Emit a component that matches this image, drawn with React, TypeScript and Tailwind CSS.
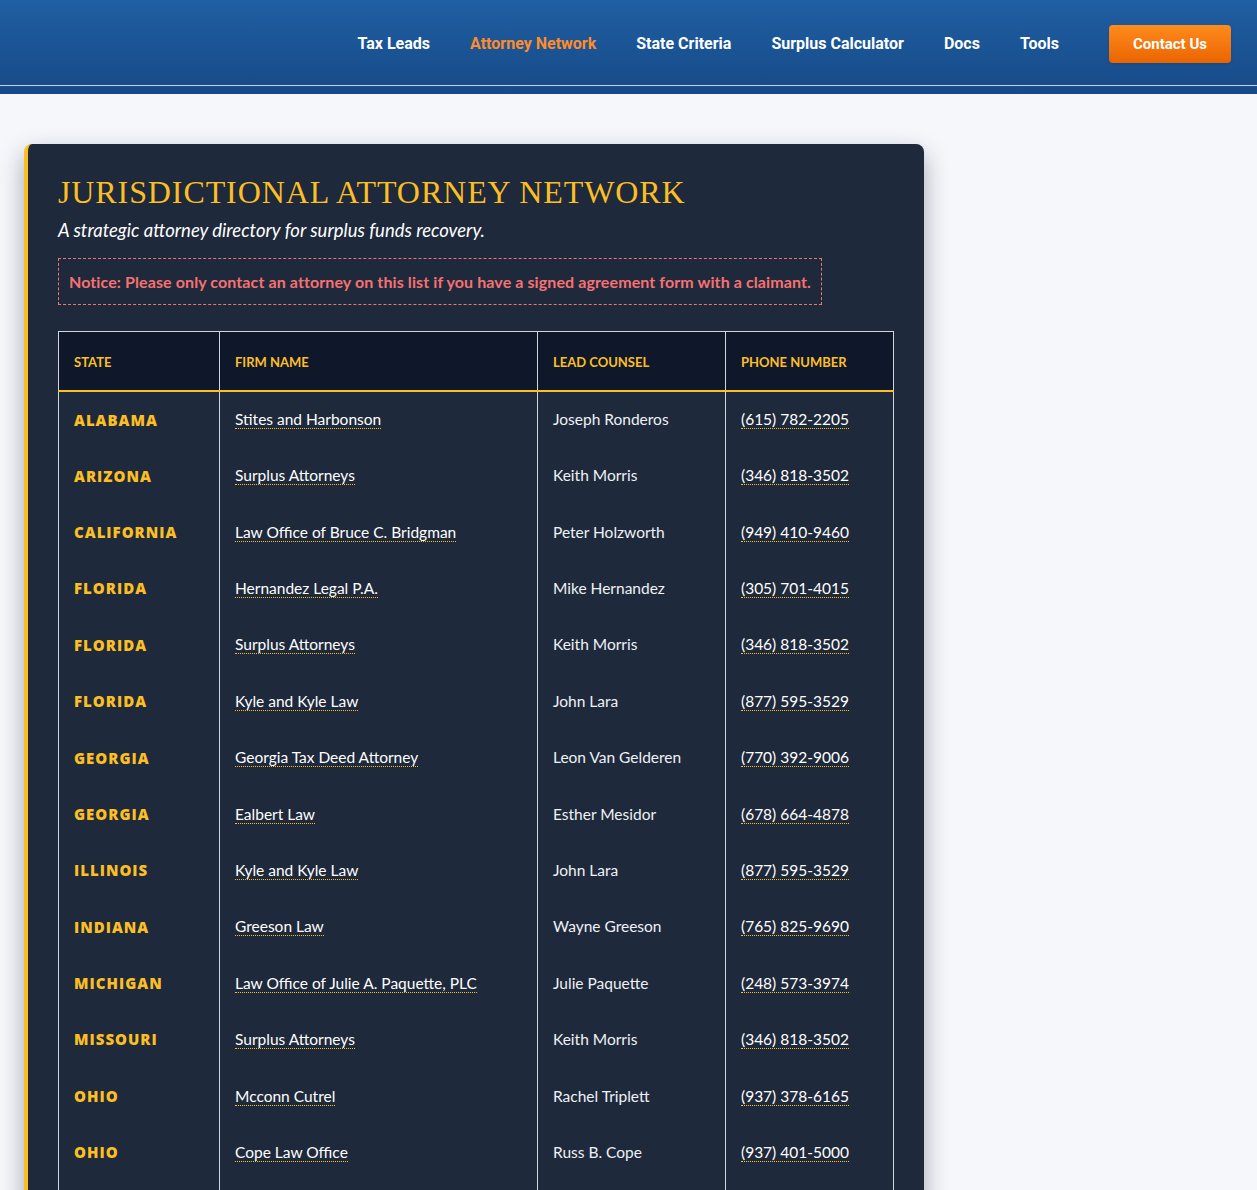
const navItems = [
  { label: "Tax Leads", active: false },
  { label: "Attorney Network", active: true },
  { label: "State Criteria", active: false },
  { label: "Surplus Calculator", active: false },
  { label: "Docs", active: false },
  { label: "Tools", active: false },
];

const attorneys = [
  { state: "Alabama", firm: "Stites and Harbonson", counsel: "Joseph Ronderos", phone: "(615) 782-2205" },
  { state: "Arizona", firm: "Surplus Attorneys", counsel: "Keith Morris", phone: "(346) 818-3502" },
  { state: "California", firm: "Law Office of Bruce C. Bridgman", counsel: "Peter Holzworth", phone: "(949) 410-9460" },
  { state: "Florida", firm: "Hernandez Legal P.A.", counsel: "Mike Hernandez", phone: "(305) 701-4015" },
  { state: "Florida", firm: "Surplus Attorneys", counsel: "Keith Morris", phone: "(346) 818-3502" },
  { state: "Florida", firm: "Kyle and Kyle Law", counsel: "John Lara", phone: "(877) 595-3529" },
  { state: "Georgia", firm: "Georgia Tax Deed Attorney", counsel: "Leon Van Gelderen", phone: "(770) 392-9006" },
  { state: "Georgia", firm: "Ealbert Law", counsel: "Esther Mesidor", phone: "(678) 664-4878" },
  { state: "Illinois", firm: "Kyle and Kyle Law", counsel: "John Lara", phone: "(877) 595-3529" },
  { state: "Indiana", firm: "Greeson Law", counsel: "Wayne Greeson", phone: "(765) 825-9690" },
  { state: "Michigan", firm: "Law Office of Julie A. Paquette, PLC", counsel: "Julie Paquette", phone: "(248) 573-3974" },
  { state: "Missouri", firm: "Surplus Attorneys", counsel: "Keith Morris", phone: "(346) 818-3502" },
  { state: "Ohio", firm: "Mcconn Cutrel", counsel: "Rachel Triplett", phone: "(937) 378-6165" },
  { state: "Ohio", firm: "Cope Law Office", counsel: "Russ B. Cope", phone: "(937) 401-5000" },
  { state: "Texas", firm: "Surplus Attorneys", counsel: "Keith Morris", phone: "(346) 818-3502" },
];

export default function App() {
  return (
    <div className="min-h-screen bg-[#f5f7fb] font-['Lato','Noto_Sans',sans-serif]">
      {/* Top navigation */}
      <header className="bg-gradient-to-b from-[#1f5fa3] to-[#174a87]">
        <nav className="h-[86px] pt-[3px] flex items-center justify-end pr-[26px] border-b border-[#c9d3de] font-['Roboto',sans-serif]">
          <ul className="flex items-center gap-10">
            {navItems.map((item) => (
              <li key={item.label}>
                <a
                  href="#"
                  className={`text-[16px] font-bold ${item.active ? "text-[#ff8c2a]" : "text-white"}`}
                >
                  {item.label}
                </a>
              </li>
            ))}
          </ul>
          <a
            href="#"
            className="ml-[50px] h-[38px] w-[122px] flex items-center justify-center rounded bg-gradient-to-b from-[#ff8b1c] to-[#ea6400] text-white text-[15px] font-bold shadow"
          >
            Contact Us
          </a>
        </nav>
        <div className="h-[8px]" />
      </header>

      <main className="pt-[50px] pl-[24px]">
        <section className="w-[900px] bg-[#1e293b] border-l-4 border-[#fbbf24] rounded-lg shadow-[0_10px_25px_rgba(15,23,42,0.35)] px-[30px] pt-[30px] pb-[30px]">
          <h1 className="font-['Liberation_Serif',serif] text-[32px] leading-[36px] tracking-[0.9px] uppercase text-[#fbbf24]">
            Jurisdictional Attorney Network
          </h1>
          <p className="mt-[7px] text-[18.5px] italic text-white">
            A strategic attorney directory for surplus funds recovery.
          </p>

          <div className="mt-[13px] inline-block border border-dashed border-[#f87171] px-[10px] py-[12px]">
            <p className="text-[16px] leading-[21px] font-bold tracking-[0.1px] text-[#f87171]">
              Notice: Please only contact an attorney on this list if you have a signed agreement form with a claimant.
            </p>
          </div>

          <table className="mt-[26px] w-[835px] border-collapse border border-[#d1d5db] table-fixed">
            <colgroup>
              <col className="w-[161px]" />
              <col className="w-[318px]" />
              <col className="w-[188px]" />
              <col className="w-[168px]" />
            </colgroup>
            <thead>
              <tr className="bg-[#0f172a] border-b-2 border-[#fbbf24]">
                {["State", "Firm Name", "Lead Counsel", "Phone Number"].map((h) => (
                  <th
                    key={h}
                    className="h-[60px] pt-[3px] px-[15px] text-left text-[13px] font-bold uppercase text-[#fbbf24] border-x border-[#d1d5db]"
                  >
                    {h}
                  </th>
                ))}
              </tr>
            </thead>
            <tbody>
              {attorneys.map((a, i) => (
                <tr key={i}>
                  <td className="h-[56.4px] px-[15px] border-x border-[#d1d5db] font-['Open_Sans',sans-serif] text-[15px] font-extrabold uppercase tracking-[1px] text-[#fbbf24]">
                    {a.state}
                  </td>
                  <td className="px-[15px] border-x border-[#d1d5db] text-[15.5px] text-white">
                    <a href="#" className="border-b border-dotted border-[#fbbf24]">
                      {a.firm}
                    </a>
                  </td>
                  <td className="px-[15px] border-x border-[#d1d5db] text-[15.5px] text-[#eef1f5]">
                    {a.counsel}
                  </td>
                  <td className="px-[15px] border-x border-[#d1d5db] text-[15.5px] text-white">
                    <a href="#" className="border-b border-dotted border-[#fbbf24]">
                      {a.phone}
                    </a>
                  </td>
                </tr>
              ))}
            </tbody>
          </table>
        </section>
      </main>
    </div>
  );
}
